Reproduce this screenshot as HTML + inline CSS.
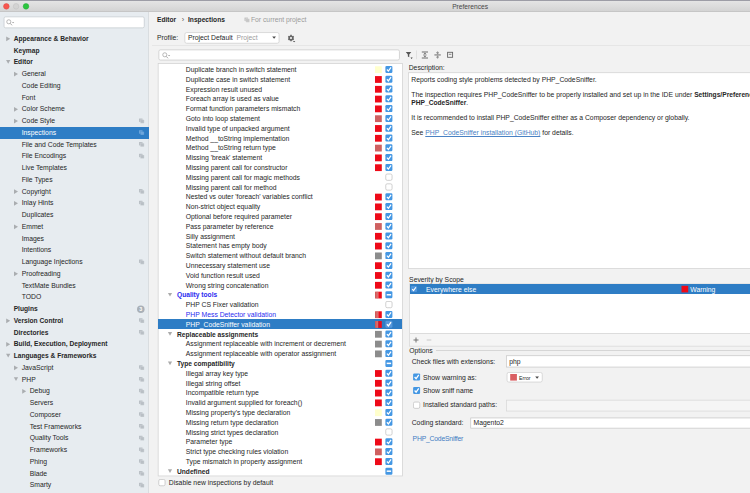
<!DOCTYPE html>
<html><head><meta charset="utf-8"><title>Preferences</title>
<style>
html,body{margin:0;padding:0;}
body{width:750px;height:493px;overflow:hidden;background:#f2f2f2;font-family:"Liberation Sans",sans-serif;color:#262626;position:relative;}
.ab{position:absolute;}
.t{position:absolute;white-space:nowrap;font-size:6.8px;line-height:10px;height:10px;}
.b{font-weight:bold;font-size:6.65px;}
.fld{position:absolute;background:#fff;border:0.6px solid #cbcbcb;box-sizing:border-box;}
</style></head><body>

<div class="ab" style="left:0px;top:0px;width:750px;height:11.7px;background:linear-gradient(#e6e6e6,#d2d2d2);"></div>
<div class="ab" style="left:0px;top:0px;width:750px;height:1.2px;background:#9d9da6;"></div>
<div class="ab" style="left:0px;top:11.4px;width:750px;height:0.6px;background:#c6c6c6;"></div>
<svg class="ab" style="left:2px;top:2px" width="10" height="10" viewBox="0 0 10 10"><g transform="translate(0.300 0.300) scale(1.0000 1.0000)"><circle cx="4.05" cy="4.05" r="2.8" fill="#f6564f" stroke="#e2463f" stroke-width="0.5"/></g></svg>
<svg class="ab" style="left:12px;top:2px" width="10" height="10" viewBox="0 0 10 10"><g transform="translate(0.050 0.300) scale(1.0000 1.0000)"><circle cx="4.05" cy="4.05" r="2.8" fill="#d3d3d3" stroke="#bfbfbf" stroke-width="0.5"/></g></svg>
<svg class="ab" style="left:21px;top:2px" width="11" height="10" viewBox="0 0 11 10"><g transform="translate(0.950 0.300) scale(1.0000 1.0000)"><circle cx="4.05" cy="4.05" r="2.8" fill="#2bc53f" stroke="#22ad33" stroke-width="0.5"/></g></svg>
<div class="t" style="left:452.2px;top:2px;color:#464646;font-size:6.65px;">Preferences</div>
<div class="ab" style="left:0px;top:12px;width:148.6px;height:481px;background:#e7ecf0;"></div>
<div class="ab" style="left:148.4px;top:12px;width:0.6px;height:481px;background:#d9dde0;"></div>
<svg class="ab" style="left:3px;top:16px" width="143" height="14" viewBox="0 0 143 14"><g transform="translate(0.700 0.500) scale(1.0000 1.0000)"><rect x="0.35" y="0.35" width="140.20" height="11.00" rx="1.6" fill="#fff" stroke="#c2c7cc" stroke-width="0.7"/></g></svg>
<svg class="ab" style="left:6px;top:19.3px" width="9" height="7" viewBox="0 0 18 14"><circle cx="5.6" cy="5.6" r="4.1" fill="none" stroke="#9c9c9c" stroke-width="1.4"/><path d="M8.6 8.8 L12 12.6" stroke="#9c9c9c" stroke-width="1.7"/><path d="M12 6 L16.4 6 L14.2 8.6 Z" fill="#9c9c9c"/></svg>
<div class="t b" style="left:13.7px;top:34px;color:#262626;">Appearance &amp; Behavior</div>
<svg class="ab" style="left:5px;top:35px" width="8" height="8" viewBox="0 0 8 8"><g transform="translate(0.200 0.850) scale(1.0000 1.0000)"><path d="M1 0.6 L5 3 L1 5.4 Z" fill="#aaadb0"/></g></svg>
<div class="t b" style="left:13.7px;top:46px;color:#262626;">Keymap</div>
<div class="t b" style="left:13.7px;top:57px;color:#262626;">Editor</div>
<svg class="ab" style="left:5px;top:58px" width="8" height="8" viewBox="0 0 8 8"><g transform="translate(0.200 0.900) scale(1.0000 1.0000)"><path d="M0.85 1.1 L5.15 1.1 L3 4.9 Z" fill="#aaadb0"/></g></svg>
<div class="t" style="left:21.7px;top:69px;color:#262626;">General</div>
<svg class="ab" style="left:13px;top:71px" width="7" height="8" viewBox="0 0 7 8"><g transform="translate(0.000 0.100) scale(1.0000 1.0000)"><path d="M1 0.6 L5 3 L1 5.4 Z" fill="#aaadb0"/></g></svg>
<div class="t" style="left:21.7px;top:81px;color:#262626;">Code Editing</div>
<div class="t" style="left:21.7px;top:93px;color:#262626;">Font</div>
<div class="t" style="left:21.7px;top:104px;color:#262626;">Color Scheme</div>
<svg class="ab" style="left:13px;top:106px" width="7" height="8" viewBox="0 0 7 8"><g transform="translate(0.000 0.350) scale(1.0000 1.0000)"><path d="M1 0.6 L5 3 L1 5.4 Z" fill="#aaadb0"/></g></svg>
<div class="t" style="left:21.7px;top:116px;color:#262626;">Code Style</div>
<svg class="ab" style="left:13px;top:118px" width="7" height="8" viewBox="0 0 7 8"><g transform="translate(0.000 0.100) scale(1.0000 1.0000)"><path d="M1 0.6 L5 3 L1 5.4 Z" fill="#aaadb0"/></g></svg>
<svg class="ab" style="left:138px;top:118px" width="8" height="7" viewBox="0 0 8 7"><g transform="translate(0.900 0.300) scale(0.5000 0.5000)"><rect x="0.2" y="0.2" width="7.2" height="7" rx="0.8" fill="#b9bfc5"/><rect x="2.9" y="2.7" width="7.6" height="7.1" rx="0.8" fill="#b9bfc5" stroke="#e7ecf0" stroke-width="0.55"/></g></svg>
<div class="ab" style="left:0px;top:127.1px;width:148.6px;height:11.6px;background:#2e7dc5;"></div>
<div class="t" style="left:21.7px;top:128px;color:#fff;">Inspections</div>
<svg class="ab" style="left:138px;top:130px" width="8" height="7" viewBox="0 0 8 7"><g transform="translate(0.900 0.050) scale(0.5000 0.5000)"><rect x="0.2" y="0.2" width="7.2" height="7" rx="0.8" fill="#6ea6dc"/><rect x="2.9" y="2.7" width="7.6" height="7.1" rx="0.8" fill="#6ea6dc" stroke="#2e7dc5" stroke-width="0.55"/></g></svg>
<div class="t" style="left:21.7px;top:140px;color:#262626;">File and Code Templates</div>
<svg class="ab" style="left:138px;top:141px" width="8" height="7" viewBox="0 0 8 7"><g transform="translate(0.900 0.800) scale(0.5000 0.5000)"><rect x="0.2" y="0.2" width="7.2" height="7" rx="0.8" fill="#b9bfc5"/><rect x="2.9" y="2.7" width="7.6" height="7.1" rx="0.8" fill="#b9bfc5" stroke="#e7ecf0" stroke-width="0.55"/></g></svg>
<div class="t" style="left:21.7px;top:151px;color:#262626;">File Encodings</div>
<svg class="ab" style="left:138px;top:153px" width="8" height="7" viewBox="0 0 8 7"><g transform="translate(0.900 0.550) scale(0.5000 0.5000)"><rect x="0.2" y="0.2" width="7.2" height="7" rx="0.8" fill="#b9bfc5"/><rect x="2.9" y="2.7" width="7.6" height="7.1" rx="0.8" fill="#b9bfc5" stroke="#e7ecf0" stroke-width="0.55"/></g></svg>
<div class="t" style="left:21.7px;top:163px;color:#262626;">Live Templates</div>
<div class="t" style="left:21.7px;top:175px;color:#262626;">File Types</div>
<div class="t" style="left:21.7px;top:187px;color:#262626;">Copyright</div>
<svg class="ab" style="left:13px;top:188px" width="7" height="8" viewBox="0 0 7 8"><g transform="translate(0.000 0.600) scale(1.0000 1.0000)"><path d="M1 0.6 L5 3 L1 5.4 Z" fill="#aaadb0"/></g></svg>
<svg class="ab" style="left:138px;top:188px" width="8" height="7" viewBox="0 0 8 7"><g transform="translate(0.900 0.800) scale(0.5000 0.5000)"><rect x="0.2" y="0.2" width="7.2" height="7" rx="0.8" fill="#b9bfc5"/><rect x="2.9" y="2.7" width="7.6" height="7.1" rx="0.8" fill="#b9bfc5" stroke="#e7ecf0" stroke-width="0.55"/></g></svg>
<div class="t" style="left:21.7px;top:198px;color:#262626;">Inlay Hints</div>
<svg class="ab" style="left:13px;top:200px" width="7" height="8" viewBox="0 0 7 8"><g transform="translate(0.000 0.350) scale(1.0000 1.0000)"><path d="M1 0.6 L5 3 L1 5.4 Z" fill="#aaadb0"/></g></svg>
<svg class="ab" style="left:138px;top:200px" width="8" height="7" viewBox="0 0 8 7"><g transform="translate(0.900 0.550) scale(0.5000 0.5000)"><rect x="0.2" y="0.2" width="7.2" height="7" rx="0.8" fill="#b9bfc5"/><rect x="2.9" y="2.7" width="7.6" height="7.1" rx="0.8" fill="#b9bfc5" stroke="#e7ecf0" stroke-width="0.55"/></g></svg>
<div class="t" style="left:21.7px;top:210px;color:#262626;">Duplicates</div>
<div class="t" style="left:21.7px;top:222px;color:#262626;">Emmet</div>
<svg class="ab" style="left:13px;top:223px" width="7" height="8" viewBox="0 0 7 8"><g transform="translate(0.000 0.850) scale(1.0000 1.0000)"><path d="M1 0.6 L5 3 L1 5.4 Z" fill="#aaadb0"/></g></svg>
<div class="t" style="left:21.7px;top:234px;color:#262626;">Images</div>
<div class="t" style="left:21.7px;top:245px;color:#262626;">Intentions</div>
<div class="t" style="left:21.7px;top:257px;color:#262626;">Language Injections</div>
<svg class="ab" style="left:138px;top:259px" width="8" height="7" viewBox="0 0 8 7"><g transform="translate(0.900 0.300) scale(0.5000 0.5000)"><rect x="0.2" y="0.2" width="7.2" height="7" rx="0.8" fill="#b9bfc5"/><rect x="2.9" y="2.7" width="7.6" height="7.1" rx="0.8" fill="#b9bfc5" stroke="#e7ecf0" stroke-width="0.55"/></g></svg>
<div class="t" style="left:21.7px;top:269px;color:#262626;">Proofreading</div>
<svg class="ab" style="left:13px;top:270px" width="7" height="8" viewBox="0 0 7 8"><g transform="translate(0.000 0.850) scale(1.0000 1.0000)"><path d="M1 0.6 L5 3 L1 5.4 Z" fill="#aaadb0"/></g></svg>
<div class="t" style="left:21.7px;top:281px;color:#262626;">TextMate Bundles</div>
<div class="t" style="left:21.7px;top:292px;color:#262626;">TODO</div>
<div class="t b" style="left:13.7px;top:304px;color:#262626;">Plugins</div>
<svg class="ab" style="left:136px;top:304px" width="11" height="12" viewBox="0 0 11 12"><g transform="translate(0.050 0.550) scale(1.0000 1.0000)"><circle cx="4.75" cy="4.75" r="3.75" fill="#a9b0b7"/></g></svg>
<div class="ab" style="left:137px;top:306px;width:7.6px;height:6px;color:#fff;font-size:5.4px;line-height:6px;text-align:center;font-weight:bold;">3</div>
<div class="t b" style="left:13.7px;top:316px;color:#262626;">Version Control</div>
<svg class="ab" style="left:5px;top:317px" width="8" height="8" viewBox="0 0 8 8"><g transform="translate(0.200 0.850) scale(1.0000 1.0000)"><path d="M1 0.6 L5 3 L1 5.4 Z" fill="#aaadb0"/></g></svg>
<svg class="ab" style="left:138px;top:318px" width="8" height="7" viewBox="0 0 8 7"><g transform="translate(0.900 0.050) scale(0.5000 0.5000)"><rect x="0.2" y="0.2" width="7.2" height="7" rx="0.8" fill="#b9bfc5"/><rect x="2.9" y="2.7" width="7.6" height="7.1" rx="0.8" fill="#b9bfc5" stroke="#e7ecf0" stroke-width="0.55"/></g></svg>
<div class="t b" style="left:13.7px;top:328px;color:#262626;">Directories</div>
<svg class="ab" style="left:138px;top:329px" width="8" height="7" viewBox="0 0 8 7"><g transform="translate(0.900 0.800) scale(0.5000 0.5000)"><rect x="0.2" y="0.2" width="7.2" height="7" rx="0.8" fill="#b9bfc5"/><rect x="2.9" y="2.7" width="7.6" height="7.1" rx="0.8" fill="#b9bfc5" stroke="#e7ecf0" stroke-width="0.55"/></g></svg>
<div class="t b" style="left:13.7px;top:339px;color:#262626;">Build, Execution, Deployment</div>
<svg class="ab" style="left:5px;top:341px" width="8" height="8" viewBox="0 0 8 8"><g transform="translate(0.200 0.350) scale(1.0000 1.0000)"><path d="M1 0.6 L5 3 L1 5.4 Z" fill="#aaadb0"/></g></svg>
<div class="t b" style="left:13.7px;top:351px;color:#262626;">Languages &amp; Frameworks</div>
<svg class="ab" style="left:5px;top:352px" width="8" height="8" viewBox="0 0 8 8"><g transform="translate(0.200 0.650) scale(1.0000 1.0000)"><path d="M0.85 1.1 L5.15 1.1 L3 4.9 Z" fill="#aaadb0"/></g></svg>
<div class="t" style="left:21.7px;top:363px;color:#262626;">JavaScript</div>
<svg class="ab" style="left:13px;top:364px" width="7" height="8" viewBox="0 0 7 8"><g transform="translate(0.000 0.850) scale(1.0000 1.0000)"><path d="M1 0.6 L5 3 L1 5.4 Z" fill="#aaadb0"/></g></svg>
<svg class="ab" style="left:138px;top:365px" width="8" height="7" viewBox="0 0 8 7"><g transform="translate(0.900 0.050) scale(0.5000 0.5000)"><rect x="0.2" y="0.2" width="7.2" height="7" rx="0.8" fill="#b9bfc5"/><rect x="2.9" y="2.7" width="7.6" height="7.1" rx="0.8" fill="#b9bfc5" stroke="#e7ecf0" stroke-width="0.55"/></g></svg>
<div class="t" style="left:21.7px;top:375px;color:#262626;">PHP</div>
<svg class="ab" style="left:13px;top:376px" width="7" height="8" viewBox="0 0 7 8"><g transform="translate(0.000 0.150) scale(1.0000 1.0000)"><path d="M0.85 1.1 L5.15 1.1 L3 4.9 Z" fill="#aaadb0"/></g></svg>
<svg class="ab" style="left:138px;top:376px" width="8" height="7" viewBox="0 0 8 7"><g transform="translate(0.900 0.800) scale(0.5000 0.5000)"><rect x="0.2" y="0.2" width="7.2" height="7" rx="0.8" fill="#b9bfc5"/><rect x="2.9" y="2.7" width="7.6" height="7.1" rx="0.8" fill="#b9bfc5" stroke="#e7ecf0" stroke-width="0.55"/></g></svg>
<div class="t" style="left:29.7px;top:386px;color:#262626;">Debug</div>
<svg class="ab" style="left:21px;top:388px" width="8" height="8" viewBox="0 0 8 8"><g transform="translate(0.200 0.350) scale(1.0000 1.0000)"><path d="M1 0.6 L5 3 L1 5.4 Z" fill="#aaadb0"/></g></svg>
<svg class="ab" style="left:138px;top:388px" width="8" height="7" viewBox="0 0 8 7"><g transform="translate(0.900 0.550) scale(0.5000 0.5000)"><rect x="0.2" y="0.2" width="7.2" height="7" rx="0.8" fill="#b9bfc5"/><rect x="2.9" y="2.7" width="7.6" height="7.1" rx="0.8" fill="#b9bfc5" stroke="#e7ecf0" stroke-width="0.55"/></g></svg>
<div class="t" style="left:29.7px;top:398px;color:#262626;">Servers</div>
<svg class="ab" style="left:138px;top:400px" width="8" height="7" viewBox="0 0 8 7"><g transform="translate(0.900 0.300) scale(0.5000 0.5000)"><rect x="0.2" y="0.2" width="7.2" height="7" rx="0.8" fill="#b9bfc5"/><rect x="2.9" y="2.7" width="7.6" height="7.1" rx="0.8" fill="#b9bfc5" stroke="#e7ecf0" stroke-width="0.55"/></g></svg>
<div class="t" style="left:29.7px;top:410px;color:#262626;">Composer</div>
<svg class="ab" style="left:138px;top:412px" width="8" height="7" viewBox="0 0 8 7"><g transform="translate(0.900 0.050) scale(0.5000 0.5000)"><rect x="0.2" y="0.2" width="7.2" height="7" rx="0.8" fill="#b9bfc5"/><rect x="2.9" y="2.7" width="7.6" height="7.1" rx="0.8" fill="#b9bfc5" stroke="#e7ecf0" stroke-width="0.55"/></g></svg>
<div class="t" style="left:29.7px;top:422px;color:#262626;">Test Frameworks</div>
<svg class="ab" style="left:138px;top:423px" width="8" height="7" viewBox="0 0 8 7"><g transform="translate(0.900 0.800) scale(0.5000 0.5000)"><rect x="0.2" y="0.2" width="7.2" height="7" rx="0.8" fill="#b9bfc5"/><rect x="2.9" y="2.7" width="7.6" height="7.1" rx="0.8" fill="#b9bfc5" stroke="#e7ecf0" stroke-width="0.55"/></g></svg>
<div class="t" style="left:29.7px;top:433px;color:#262626;">Quality Tools</div>
<svg class="ab" style="left:138px;top:435px" width="8" height="7" viewBox="0 0 8 7"><g transform="translate(0.900 0.550) scale(0.5000 0.5000)"><rect x="0.2" y="0.2" width="7.2" height="7" rx="0.8" fill="#b9bfc5"/><rect x="2.9" y="2.7" width="7.6" height="7.1" rx="0.8" fill="#b9bfc5" stroke="#e7ecf0" stroke-width="0.55"/></g></svg>
<div class="t" style="left:29.7px;top:445px;color:#262626;">Frameworks</div>
<svg class="ab" style="left:138px;top:447px" width="8" height="7" viewBox="0 0 8 7"><g transform="translate(0.900 0.300) scale(0.5000 0.5000)"><rect x="0.2" y="0.2" width="7.2" height="7" rx="0.8" fill="#b9bfc5"/><rect x="2.9" y="2.7" width="7.6" height="7.1" rx="0.8" fill="#b9bfc5" stroke="#e7ecf0" stroke-width="0.55"/></g></svg>
<div class="t" style="left:29.7px;top:457px;color:#262626;">Phing</div>
<svg class="ab" style="left:138px;top:459px" width="8" height="7" viewBox="0 0 8 7"><g transform="translate(0.900 0.050) scale(0.5000 0.5000)"><rect x="0.2" y="0.2" width="7.2" height="7" rx="0.8" fill="#b9bfc5"/><rect x="2.9" y="2.7" width="7.6" height="7.1" rx="0.8" fill="#b9bfc5" stroke="#e7ecf0" stroke-width="0.55"/></g></svg>
<div class="t" style="left:29.7px;top:469px;color:#262626;">Blade</div>
<svg class="ab" style="left:138px;top:470px" width="8" height="7" viewBox="0 0 8 7"><g transform="translate(0.900 0.800) scale(0.5000 0.5000)"><rect x="0.2" y="0.2" width="7.2" height="7" rx="0.8" fill="#b9bfc5"/><rect x="2.9" y="2.7" width="7.6" height="7.1" rx="0.8" fill="#b9bfc5" stroke="#e7ecf0" stroke-width="0.55"/></g></svg>
<div class="t" style="left:29.7px;top:480px;color:#262626;">Smarty</div>
<svg class="ab" style="left:138px;top:482px" width="8" height="7" viewBox="0 0 8 7"><g transform="translate(0.900 0.550) scale(0.5000 0.5000)"><rect x="0.2" y="0.2" width="7.2" height="7" rx="0.8" fill="#b9bfc5"/><rect x="2.9" y="2.7" width="7.6" height="7.1" rx="0.8" fill="#b9bfc5" stroke="#e7ecf0" stroke-width="0.55"/></g></svg>
<div class="t b" style="left:157px;top:15px;">Editor</div>
<div class="t" style="left:181.8px;top:15px;color:#555;font-size:7.4px;">›</div>
<div class="t b" style="left:188px;top:15px;">Inspections</div>
<svg class="ab" style="left:244px;top:17px" width="7" height="7" viewBox="0 0 7 7"><g transform="translate(0.300 0.300) scale(0.5000 0.5000)"><rect x="0.2" y="0.2" width="7.2" height="7" rx="0.8" fill="#c6c6c6"/><rect x="2.9" y="2.7" width="7.6" height="7.1" rx="0.8" fill="#c6c6c6" stroke="#f2f2f2" stroke-width="0.55"/></g></svg>
<div class="t" style="left:250.9px;top:15px;color:#9b9b9b;">For current project</div>
<div class="ab" style="left:152px;top:45.2px;width:598px;height:0.6px;background:#e6e6e6;"></div>
<div class="t" style="left:157px;top:33px;">Profile:</div>
<svg class="ab" style="left:184px;top:32px" width="97" height="13" viewBox="0 0 97 13"><g transform="translate(0.500 0.200) scale(1.0000 1.0000)"><rect x="0.35" y="0.35" width="94.20" height="10.70" rx="1.8" fill="#fff" stroke="#cdcdcd" stroke-width="0.7"/></g></svg>
<div class="t" style="left:188px;top:33px;">Project Default</div>
<div class="t" style="left:236.4px;top:33px;color:#9b9b9b;">Project</div>
<svg class="ab" style="left:272px;top:36px" width="6" height="4" viewBox="0 0 6 4"><g transform="translate(0.100 0.500) scale(0.8000 0.8000)"><path d="M0.1 0.1 L4.9 0.1 L2.5 2.95 Z" fill="#4a4a4a"/></g></svg>
<svg class="ab" style="left:286.8px;top:33.8px" width="10" height="10" viewBox="-4 -4 10 10"><circle cx="0" cy="0" r="1.85" fill="none" stroke="#666" stroke-width="1.5"/><path d="M0.00 -2.00 L0.00 -3.15 M1.73 -1.00 L2.73 -1.58 M1.73 1.00 L2.73 1.57 M0.00 2.00 L0.00 3.15 M-1.73 1.00 L-2.73 1.58 M-1.73 -1.00 L-2.73 -1.58" stroke="#666" stroke-width="1.45" fill="none"/><path d="M1.9 3 L4.3 3 L3.1 4.3 Z" fill="#4a4a4a"/></svg>
<svg class="ab" style="left:158px;top:49px" width="243" height="13" viewBox="0 0 243 13"><g transform="translate(0.500 0.500) scale(1.0000 1.0000)"><rect x="0.35" y="0.35" width="240.60" height="10.20" rx="1.6" fill="#fff" stroke="#c6c6c6" stroke-width="0.7"/></g></svg>
<svg class="ab" style="left:161.5px;top:51.8px" width="9" height="7" viewBox="0 0 18 14"><circle cx="5.6" cy="5.6" r="4.1" fill="none" stroke="#9c9c9c" stroke-width="1.4"/><path d="M8.6 8.8 L12 12.6" stroke="#9c9c9c" stroke-width="1.7"/><path d="M12 6 L16.4 6 L14.2 8.6 Z" fill="#9c9c9c"/></svg>
<svg class="ab" style="left:404px;top:50px" width="52" height="10" viewBox="0 0 104 20"><path d="M3.6 3.8 H14.6 L10.5 8.8 V14.6 L7.7 13.2 V8.8 Z" fill="#555"/><path d="M13 15 L17.4 15 L15.2 17.8 Z" fill="#3c3c3c"/><rect x="24.8" y="0.8" width="1.1" height="17.6" fill="#d4d4d4"/><g stroke="#666" stroke-width="1.9" fill="none"><path d="M35.6 4 H48 M35.6 16 H48"/><path d="M41.8 6.4 V13.6 M39 8.8 L41.8 6.2 L44.6 8.8 M39 11.2 L41.8 13.8 L44.6 11.2" stroke-width="1.5"/></g><g stroke="#666" stroke-width="1.9" fill="none"><path d="M60.8 9.9 H73.6"/><path d="M67.2 3 V7 M64.6 5 L67.2 7.4 L69.8 5 M67.2 17 V12.8 M64.6 14.8 L67.2 12.4 L69.8 14.8" stroke-width="1.5"/></g><g stroke="#666" stroke-width="1.8" fill="none"><rect x="87.2" y="4.6" width="10" height="10"/><path d="M89.6 8.6 H94.8" stroke-width="1.5"/></g></svg>
<svg class="ab" style="left:157px;top:63px" width="247" height="415" viewBox="0 0 247 415"><g transform="translate(0.800 0.300) scale(1.0000 1.0000)"><rect x="0.35" y="0.35" width="244.20" height="412.30" rx="0" fill="#fff" stroke="#d0d0d0" stroke-width="0.7"/></g></svg>
<div class="t" style="left:185.8px;top:65px;color:#262626;">Duplicate branch in switch statement</div>
<svg class="ab" style="left:375px;top:66px" width="8" height="9" viewBox="0 0 8 9"><g transform="translate(0.000 0.280) scale(1.0000 1.0000)"><rect width="6.8" height="6.8" fill="#ffffcc"/></g></svg>
<svg class="ab" style="left:385px;top:65px" width="9" height="9" viewBox="0 0 9 9"><g transform="translate(0.400 0.880) scale(0.5000 0.5000)"><rect width="14" height="14" rx="2.4" fill="#4497e3"/><path d="M3 7.2 L6 10.5 L11.3 3.1" fill="none" stroke="#fff" stroke-width="2.5"/></g></svg>
<div class="t" style="left:185.8px;top:75px;color:#262626;">Duplicate case in switch statement</div>
<svg class="ab" style="left:375px;top:76px" width="8" height="8" viewBox="0 0 8 8"><g transform="translate(0.000 0.080) scale(1.0000 1.0000)"><rect width="6.8" height="6.8" fill="#ee0a18"/></g></svg>
<svg class="ab" style="left:385px;top:75px" width="9" height="9" viewBox="0 0 9 9"><g transform="translate(0.400 0.680) scale(0.5000 0.5000)"><rect width="14" height="14" rx="2.4" fill="#4497e3"/><path d="M3 7.2 L6 10.5 L11.3 3.1" fill="none" stroke="#fff" stroke-width="2.5"/></g></svg>
<div class="t" style="left:185.8px;top:85px;color:#262626;">Expression result unused</div>
<svg class="ab" style="left:375px;top:85px" width="8" height="9" viewBox="0 0 8 9"><g transform="translate(0.000 0.880) scale(1.0000 1.0000)"><rect width="6.8" height="6.8" fill="#ee0a18"/></g></svg>
<svg class="ab" style="left:385px;top:85px" width="9" height="9" viewBox="0 0 9 9"><g transform="translate(0.400 0.480) scale(0.5000 0.5000)"><rect width="14" height="14" rx="2.4" fill="#4497e3"/><path d="M3 7.2 L6 10.5 L11.3 3.1" fill="none" stroke="#fff" stroke-width="2.5"/></g></svg>
<div class="t" style="left:185.8px;top:94px;color:#262626;">Foreach array is used as value</div>
<svg class="ab" style="left:375px;top:95px" width="8" height="9" viewBox="0 0 8 9"><g transform="translate(0.000 0.680) scale(1.0000 1.0000)"><rect width="6.8" height="6.8" fill="#ee0a18"/></g></svg>
<svg class="ab" style="left:385px;top:95px" width="9" height="9" viewBox="0 0 9 9"><g transform="translate(0.400 0.280) scale(0.5000 0.5000)"><rect width="14" height="14" rx="2.4" fill="#4497e3"/><path d="M3 7.2 L6 10.5 L11.3 3.1" fill="none" stroke="#fff" stroke-width="2.5"/></g></svg>
<div class="t" style="left:185.8px;top:104px;color:#262626;">Format function parameters mismatch</div>
<svg class="ab" style="left:375px;top:105px" width="8" height="9" viewBox="0 0 8 9"><g transform="translate(0.000 0.480) scale(1.0000 1.0000)"><rect width="6.8" height="6.8" fill="#ee0a18"/></g></svg>
<svg class="ab" style="left:385px;top:105px" width="9" height="9" viewBox="0 0 9 9"><g transform="translate(0.400 0.080) scale(0.5000 0.5000)"><rect width="14" height="14" rx="2.4" fill="#4497e3"/><path d="M3 7.2 L6 10.5 L11.3 3.1" fill="none" stroke="#fff" stroke-width="2.5"/></g></svg>
<div class="t" style="left:185.8px;top:114px;color:#262626;">Goto into loop statement</div>
<svg class="ab" style="left:375px;top:115px" width="8" height="9" viewBox="0 0 8 9"><g transform="translate(0.000 0.280) scale(1.0000 1.0000)"><rect width="6.8" height="6.8" fill="#cf6060"/></g></svg>
<svg class="ab" style="left:385px;top:114px" width="9" height="9" viewBox="0 0 9 9"><g transform="translate(0.400 0.880) scale(0.5000 0.5000)"><rect width="14" height="14" rx="2.4" fill="#4497e3"/><path d="M3 7.2 L6 10.5 L11.3 3.1" fill="none" stroke="#fff" stroke-width="2.5"/></g></svg>
<div class="t" style="left:185.8px;top:124px;color:#262626;">Invalid type of unpacked argument</div>
<svg class="ab" style="left:375px;top:125px" width="8" height="8" viewBox="0 0 8 8"><g transform="translate(0.000 0.080) scale(1.0000 1.0000)"><rect width="6.8" height="6.8" fill="#ee0a18"/></g></svg>
<svg class="ab" style="left:385px;top:124px" width="9" height="9" viewBox="0 0 9 9"><g transform="translate(0.400 0.680) scale(0.5000 0.5000)"><rect width="14" height="14" rx="2.4" fill="#4497e3"/><path d="M3 7.2 L6 10.5 L11.3 3.1" fill="none" stroke="#fff" stroke-width="2.5"/></g></svg>
<div class="t" style="left:185.8px;top:134px;color:#262626;">Method __toString implementation</div>
<svg class="ab" style="left:375px;top:134px" width="8" height="9" viewBox="0 0 8 9"><g transform="translate(0.000 0.880) scale(1.0000 1.0000)"><rect width="6.8" height="6.8" fill="#ee0a18"/></g></svg>
<svg class="ab" style="left:385px;top:134px" width="9" height="9" viewBox="0 0 9 9"><g transform="translate(0.400 0.480) scale(0.5000 0.5000)"><rect width="14" height="14" rx="2.4" fill="#4497e3"/><path d="M3 7.2 L6 10.5 L11.3 3.1" fill="none" stroke="#fff" stroke-width="2.5"/></g></svg>
<div class="t" style="left:185.8px;top:143px;color:#262626;">Method __toString return type</div>
<svg class="ab" style="left:375px;top:144px" width="8" height="9" viewBox="0 0 8 9"><g transform="translate(0.000 0.680) scale(1.0000 1.0000)"><rect width="6.8" height="6.8" fill="#cf6060"/></g></svg>
<svg class="ab" style="left:385px;top:144px" width="9" height="9" viewBox="0 0 9 9"><g transform="translate(0.400 0.280) scale(0.5000 0.5000)"><rect width="14" height="14" rx="2.4" fill="#4497e3"/><path d="M3 7.2 L6 10.5 L11.3 3.1" fill="none" stroke="#fff" stroke-width="2.5"/></g></svg>
<div class="t" style="left:185.8px;top:153px;color:#262626;">Missing 'break' statement</div>
<svg class="ab" style="left:375px;top:154px" width="8" height="9" viewBox="0 0 8 9"><g transform="translate(0.000 0.480) scale(1.0000 1.0000)"><rect width="6.8" height="6.8" fill="#ee0a18"/></g></svg>
<svg class="ab" style="left:385px;top:154px" width="9" height="9" viewBox="0 0 9 9"><g transform="translate(0.400 0.080) scale(0.5000 0.5000)"><rect width="14" height="14" rx="2.4" fill="#4497e3"/><path d="M3 7.2 L6 10.5 L11.3 3.1" fill="none" stroke="#fff" stroke-width="2.5"/></g></svg>
<div class="t" style="left:185.8px;top:163px;color:#262626;">Missing parent call for constructor</div>
<svg class="ab" style="left:375px;top:164px" width="8" height="9" viewBox="0 0 8 9"><g transform="translate(0.000 0.280) scale(1.0000 1.0000)"><rect width="6.8" height="6.8" fill="#ee0a18"/></g></svg>
<svg class="ab" style="left:385px;top:163px" width="9" height="9" viewBox="0 0 9 9"><g transform="translate(0.400 0.880) scale(0.5000 0.5000)"><rect width="14" height="14" rx="2.4" fill="#4497e3"/><path d="M3 7.2 L6 10.5 L11.3 3.1" fill="none" stroke="#fff" stroke-width="2.5"/></g></svg>
<div class="t" style="left:185.8px;top:173px;color:#262626;">Missing parent call for magic methods</div>
<svg class="ab" style="left:385px;top:173px" width="9" height="9" viewBox="0 0 9 9"><g transform="translate(0.400 0.680) scale(0.5000 0.5000)"><rect x="0.7" y="0.7" width="12.6" height="12.6" rx="2.8" fill="#fff" stroke="#bdbdbd" stroke-width="1.4"/></g></svg>
<div class="t" style="left:185.8px;top:183px;color:#262626;">Missing parent call for method</div>
<svg class="ab" style="left:385px;top:183px" width="9" height="9" viewBox="0 0 9 9"><g transform="translate(0.400 0.480) scale(0.5000 0.5000)"><rect x="0.7" y="0.7" width="12.6" height="12.6" rx="2.8" fill="#fff" stroke="#bdbdbd" stroke-width="1.4"/></g></svg>
<div class="t" style="left:185.8px;top:192px;color:#262626;">Nested vs outer 'foreach' variables conflict</div>
<svg class="ab" style="left:375px;top:193px" width="8" height="9" viewBox="0 0 8 9"><g transform="translate(0.000 0.680) scale(1.0000 1.0000)"><rect width="6.8" height="6.8" fill="#ee0a18"/></g></svg>
<svg class="ab" style="left:385px;top:193px" width="9" height="9" viewBox="0 0 9 9"><g transform="translate(0.400 0.280) scale(0.5000 0.5000)"><rect width="14" height="14" rx="2.4" fill="#4497e3"/><path d="M3 7.2 L6 10.5 L11.3 3.1" fill="none" stroke="#fff" stroke-width="2.5"/></g></svg>
<div class="t" style="left:185.8px;top:202px;color:#262626;">Non-strict object equality</div>
<svg class="ab" style="left:375px;top:203px" width="8" height="9" viewBox="0 0 8 9"><g transform="translate(0.000 0.480) scale(1.0000 1.0000)"><rect width="6.8" height="6.8" fill="#ee0a18"/></g></svg>
<svg class="ab" style="left:385px;top:203px" width="9" height="9" viewBox="0 0 9 9"><g transform="translate(0.400 0.080) scale(0.5000 0.5000)"><rect width="14" height="14" rx="2.4" fill="#4497e3"/><path d="M3 7.2 L6 10.5 L11.3 3.1" fill="none" stroke="#fff" stroke-width="2.5"/></g></svg>
<div class="t" style="left:185.8px;top:212px;color:#262626;">Optional before required parameter</div>
<svg class="ab" style="left:375px;top:213px" width="8" height="9" viewBox="0 0 8 9"><g transform="translate(0.000 0.280) scale(1.0000 1.0000)"><rect width="6.8" height="6.8" fill="#ee0a18"/></g></svg>
<svg class="ab" style="left:385px;top:212px" width="9" height="9" viewBox="0 0 9 9"><g transform="translate(0.400 0.880) scale(0.5000 0.5000)"><rect width="14" height="14" rx="2.4" fill="#4497e3"/><path d="M3 7.2 L6 10.5 L11.3 3.1" fill="none" stroke="#fff" stroke-width="2.5"/></g></svg>
<div class="t" style="left:185.8px;top:222px;color:#262626;">Pass parameter by reference</div>
<svg class="ab" style="left:375px;top:223px" width="8" height="8" viewBox="0 0 8 8"><g transform="translate(0.000 0.080) scale(1.0000 1.0000)"><rect width="6.8" height="6.8" fill="#cf6060"/></g></svg>
<svg class="ab" style="left:385px;top:222px" width="9" height="9" viewBox="0 0 9 9"><g transform="translate(0.400 0.680) scale(0.5000 0.5000)"><rect width="14" height="14" rx="2.4" fill="#4497e3"/><path d="M3 7.2 L6 10.5 L11.3 3.1" fill="none" stroke="#fff" stroke-width="2.5"/></g></svg>
<div class="t" style="left:185.8px;top:232px;color:#262626;">Silly assignment</div>
<svg class="ab" style="left:375px;top:232px" width="8" height="9" viewBox="0 0 8 9"><g transform="translate(0.000 0.880) scale(1.0000 1.0000)"><rect width="6.8" height="6.8" fill="#ee0a18"/></g></svg>
<svg class="ab" style="left:385px;top:232px" width="9" height="9" viewBox="0 0 9 9"><g transform="translate(0.400 0.480) scale(0.5000 0.5000)"><rect width="14" height="14" rx="2.4" fill="#4497e3"/><path d="M3 7.2 L6 10.5 L11.3 3.1" fill="none" stroke="#fff" stroke-width="2.5"/></g></svg>
<div class="t" style="left:185.8px;top:241px;color:#262626;">Statement has empty body</div>
<svg class="ab" style="left:375px;top:242px" width="8" height="9" viewBox="0 0 8 9"><g transform="translate(0.000 0.680) scale(1.0000 1.0000)"><rect width="6.8" height="6.8" fill="#ee0a18"/></g></svg>
<svg class="ab" style="left:385px;top:242px" width="9" height="9" viewBox="0 0 9 9"><g transform="translate(0.400 0.280) scale(0.5000 0.5000)"><rect width="14" height="14" rx="2.4" fill="#4497e3"/><path d="M3 7.2 L6 10.5 L11.3 3.1" fill="none" stroke="#fff" stroke-width="2.5"/></g></svg>
<div class="t" style="left:185.8px;top:251px;color:#262626;">Switch statement without default branch</div>
<svg class="ab" style="left:375px;top:252px" width="8" height="9" viewBox="0 0 8 9"><g transform="translate(0.000 0.480) scale(1.0000 1.0000)"><rect width="6.8" height="6.8" fill="#8c8c8c"/></g></svg>
<svg class="ab" style="left:385px;top:252px" width="9" height="9" viewBox="0 0 9 9"><g transform="translate(0.400 0.080) scale(0.5000 0.5000)"><rect width="14" height="14" rx="2.4" fill="#4497e3"/><path d="M3 7.2 L6 10.5 L11.3 3.1" fill="none" stroke="#fff" stroke-width="2.5"/></g></svg>
<div class="t" style="left:185.8px;top:261px;color:#262626;">Unnecessary statement use</div>
<svg class="ab" style="left:375px;top:262px" width="8" height="9" viewBox="0 0 8 9"><g transform="translate(0.000 0.280) scale(1.0000 1.0000)"><rect width="6.8" height="6.8" fill="#ee0a18"/></g></svg>
<svg class="ab" style="left:385px;top:261px" width="9" height="9" viewBox="0 0 9 9"><g transform="translate(0.400 0.880) scale(0.5000 0.5000)"><rect width="14" height="14" rx="2.4" fill="#4497e3"/><path d="M3 7.2 L6 10.5 L11.3 3.1" fill="none" stroke="#fff" stroke-width="2.5"/></g></svg>
<div class="t" style="left:185.8px;top:271px;color:#262626;">Void function result used</div>
<svg class="ab" style="left:375px;top:272px" width="8" height="8" viewBox="0 0 8 8"><g transform="translate(0.000 0.080) scale(1.0000 1.0000)"><rect width="6.8" height="6.8" fill="#ee0a18"/></g></svg>
<svg class="ab" style="left:385px;top:271px" width="9" height="9" viewBox="0 0 9 9"><g transform="translate(0.400 0.680) scale(0.5000 0.5000)"><rect width="14" height="14" rx="2.4" fill="#4497e3"/><path d="M3 7.2 L6 10.5 L11.3 3.1" fill="none" stroke="#fff" stroke-width="2.5"/></g></svg>
<div class="t" style="left:185.8px;top:281px;color:#262626;">Wrong string concatenation</div>
<svg class="ab" style="left:375px;top:281px" width="8" height="9" viewBox="0 0 8 9"><g transform="translate(0.000 0.880) scale(1.0000 1.0000)"><rect width="6.8" height="6.8" fill="#ee0a18"/></g></svg>
<svg class="ab" style="left:385px;top:281px" width="9" height="9" viewBox="0 0 9 9"><g transform="translate(0.400 0.480) scale(0.5000 0.5000)"><rect width="14" height="14" rx="2.4" fill="#4497e3"/><path d="M3 7.2 L6 10.5 L11.3 3.1" fill="none" stroke="#fff" stroke-width="2.5"/></g></svg>
<svg class="ab" style="left:167px;top:291px" width="7" height="8" viewBox="0 0 7 8"><g transform="translate(0.000 0.730) scale(1.0000 1.0000)"><path d="M0.9 1.15 L5.1 1.15 L3 4.85 Z" fill="#ababab"/></g></svg>
<div class="t b" style="left:177px;top:290px;color:#2a2af0;">Quality tools</div>
<svg class="ab" style="left:375px;top:291px" width="8" height="9" viewBox="0 0 8 9"><g transform="translate(0.000 0.680) scale(1.0000 1.0000)"><rect x="0" y="0" width="3.3" height="6.8" fill="#cf5252"/><rect x="0.8" y="0" width="0.7" height="6.8" fill="#e07a7a"/><rect x="2.2" y="0" width="0.7" height="6.8" fill="#e07a7a"/><rect x="3.3" y="0" width="3.5" height="6.8" fill="#ee0a18"/></g></svg>
<svg class="ab" style="left:385px;top:291px" width="9" height="9" viewBox="0 0 9 9"><g transform="translate(0.400 0.280) scale(0.5000 0.5000)"><rect width="14" height="14" rx="2.4" fill="#4497e3"/><rect x="2.6" y="5.5" width="8.8" height="3" fill="#fff"/></g></svg>
<div class="t" style="left:185.8px;top:300px;color:#262626;">PHP CS Fixer validation</div>
<svg class="ab" style="left:385px;top:301px" width="9" height="9" viewBox="0 0 9 9"><g transform="translate(0.400 0.080) scale(0.5000 0.5000)"><rect x="0.7" y="0.7" width="12.6" height="12.6" rx="2.8" fill="#fff" stroke="#bdbdbd" stroke-width="1.4"/></g></svg>
<div class="t" style="left:185.8px;top:310px;color:#2a2af0;">PHP Mess Detector validation</div>
<svg class="ab" style="left:375px;top:311px" width="8" height="9" viewBox="0 0 8 9"><g transform="translate(0.000 0.280) scale(1.0000 1.0000)"><rect x="0" y="0" width="3.3" height="6.8" fill="#cf5252"/><rect x="0.8" y="0" width="0.7" height="6.8" fill="#e07a7a"/><rect x="2.2" y="0" width="0.7" height="6.8" fill="#e07a7a"/><rect x="3.3" y="0" width="3.5" height="6.8" fill="#ee0a18"/></g></svg>
<svg class="ab" style="left:385px;top:310px" width="9" height="9" viewBox="0 0 9 9"><g transform="translate(0.400 0.880) scale(0.5000 0.5000)"><rect width="14" height="14" rx="2.4" fill="#4497e3"/><path d="M3 7.2 L6 10.5 L11.3 3.1" fill="none" stroke="#fff" stroke-width="2.5"/></g></svg>
<div class="ab" style="left:157.6px;top:319.23px;width:244.6px;height:9.8px;background:#2e7dc5;"></div>
<div class="t" style="left:185.8px;top:320px;color:#fff;">PHP_CodeSniffer validation</div>
<svg class="ab" style="left:375px;top:321px" width="8" height="8" viewBox="0 0 8 8"><g transform="translate(0.000 0.080) scale(1.0000 1.0000)"><rect x="0" y="0" width="3.3" height="6.8" fill="#cf5252"/><rect x="0.8" y="0" width="0.7" height="6.8" fill="#e07a7a"/><rect x="2.2" y="0" width="0.7" height="6.8" fill="#e07a7a"/><rect x="3.3" y="0" width="3.5" height="6.8" fill="#ee0a18"/></g></svg>
<svg class="ab" style="left:385px;top:320px" width="9" height="9" viewBox="0 0 9 9"><g transform="translate(0.400 0.680) scale(0.5000 0.5000)"><rect width="14" height="14" rx="2.4" fill="#5598dc"/><path d="M3 7.2 L6 10.5 L11.3 3.1" fill="none" stroke="#fff" stroke-width="2.5"/></g></svg>
<svg class="ab" style="left:167px;top:330px" width="7" height="8" viewBox="0 0 7 8"><g transform="translate(0.000 0.930) scale(1.0000 1.0000)"><path d="M0.9 1.15 L5.1 1.15 L3 4.85 Z" fill="#ababab"/></g></svg>
<div class="t b" style="left:177px;top:330px;color:#262626;">Replaceable assignments</div>
<svg class="ab" style="left:375px;top:330px" width="8" height="9" viewBox="0 0 8 9"><g transform="translate(0.000 0.880) scale(1.0000 1.0000)"><rect width="6.8" height="6.8" fill="#8c8c8c"/></g></svg>
<svg class="ab" style="left:385px;top:330px" width="9" height="9" viewBox="0 0 9 9"><g transform="translate(0.400 0.480) scale(0.5000 0.5000)"><rect width="14" height="14" rx="2.4" fill="#4497e3"/><path d="M3 7.2 L6 10.5 L11.3 3.1" fill="none" stroke="#fff" stroke-width="2.5"/></g></svg>
<div class="t" style="left:185.8px;top:339px;color:#262626;">Assignment replaceable with increment or decrement</div>
<svg class="ab" style="left:375px;top:340px" width="8" height="9" viewBox="0 0 8 9"><g transform="translate(0.000 0.680) scale(1.0000 1.0000)"><rect width="6.8" height="6.8" fill="#8c8c8c"/></g></svg>
<svg class="ab" style="left:385px;top:340px" width="9" height="9" viewBox="0 0 9 9"><g transform="translate(0.400 0.280) scale(0.5000 0.5000)"><rect width="14" height="14" rx="2.4" fill="#4497e3"/><path d="M3 7.2 L6 10.5 L11.3 3.1" fill="none" stroke="#fff" stroke-width="2.5"/></g></svg>
<div class="t" style="left:185.8px;top:349px;color:#262626;">Assignment replaceable with operator assignment</div>
<svg class="ab" style="left:375px;top:350px" width="8" height="9" viewBox="0 0 8 9"><g transform="translate(0.000 0.480) scale(1.0000 1.0000)"><rect width="6.8" height="6.8" fill="#8c8c8c"/></g></svg>
<svg class="ab" style="left:385px;top:350px" width="9" height="9" viewBox="0 0 9 9"><g transform="translate(0.400 0.080) scale(0.5000 0.5000)"><rect width="14" height="14" rx="2.4" fill="#4497e3"/><path d="M3 7.2 L6 10.5 L11.3 3.1" fill="none" stroke="#fff" stroke-width="2.5"/></g></svg>
<svg class="ab" style="left:167px;top:360px" width="7" height="8" viewBox="0 0 7 8"><g transform="translate(0.000 0.330) scale(1.0000 1.0000)"><path d="M0.9 1.15 L5.1 1.15 L3 4.85 Z" fill="#ababab"/></g></svg>
<div class="t b" style="left:177px;top:359px;color:#262626;">Type compatibility</div>
<svg class="ab" style="left:385px;top:359px" width="9" height="9" viewBox="0 0 9 9"><g transform="translate(0.400 0.880) scale(0.5000 0.5000)"><rect width="14" height="14" rx="2.4" fill="#4497e3"/><rect x="2.6" y="5.5" width="8.8" height="3" fill="#fff"/></g></svg>
<div class="t" style="left:185.8px;top:369px;color:#262626;">Illegal array key type</div>
<svg class="ab" style="left:375px;top:370px" width="8" height="8" viewBox="0 0 8 8"><g transform="translate(0.000 0.080) scale(1.0000 1.0000)"><rect width="6.8" height="6.8" fill="#ee0a18"/></g></svg>
<svg class="ab" style="left:385px;top:369px" width="9" height="9" viewBox="0 0 9 9"><g transform="translate(0.400 0.680) scale(0.5000 0.5000)"><rect width="14" height="14" rx="2.4" fill="#4497e3"/><path d="M3 7.2 L6 10.5 L11.3 3.1" fill="none" stroke="#fff" stroke-width="2.5"/></g></svg>
<div class="t" style="left:185.8px;top:379px;color:#262626;">Illegal string offset</div>
<svg class="ab" style="left:375px;top:379px" width="8" height="9" viewBox="0 0 8 9"><g transform="translate(0.000 0.880) scale(1.0000 1.0000)"><rect width="6.8" height="6.8" fill="#ee0a18"/></g></svg>
<svg class="ab" style="left:385px;top:379px" width="9" height="9" viewBox="0 0 9 9"><g transform="translate(0.400 0.480) scale(0.5000 0.5000)"><rect width="14" height="14" rx="2.4" fill="#4497e3"/><path d="M3 7.2 L6 10.5 L11.3 3.1" fill="none" stroke="#fff" stroke-width="2.5"/></g></svg>
<div class="t" style="left:185.8px;top:388px;color:#262626;">Incompatible return type</div>
<svg class="ab" style="left:375px;top:389px" width="8" height="9" viewBox="0 0 8 9"><g transform="translate(0.000 0.680) scale(1.0000 1.0000)"><rect width="6.8" height="6.8" fill="#ee0a18"/></g></svg>
<svg class="ab" style="left:385px;top:389px" width="9" height="9" viewBox="0 0 9 9"><g transform="translate(0.400 0.280) scale(0.5000 0.5000)"><rect width="14" height="14" rx="2.4" fill="#4497e3"/><path d="M3 7.2 L6 10.5 L11.3 3.1" fill="none" stroke="#fff" stroke-width="2.5"/></g></svg>
<div class="t" style="left:185.8px;top:398px;color:#262626;">Invalid argument supplied for foreach()</div>
<svg class="ab" style="left:375px;top:399px" width="8" height="9" viewBox="0 0 8 9"><g transform="translate(0.000 0.480) scale(1.0000 1.0000)"><rect width="6.8" height="6.8" fill="#ee0a18"/></g></svg>
<svg class="ab" style="left:385px;top:399px" width="9" height="9" viewBox="0 0 9 9"><g transform="translate(0.400 0.080) scale(0.5000 0.5000)"><rect width="14" height="14" rx="2.4" fill="#4497e3"/><path d="M3 7.2 L6 10.5 L11.3 3.1" fill="none" stroke="#fff" stroke-width="2.5"/></g></svg>
<div class="t" style="left:185.8px;top:408px;color:#262626;">Missing property's type declaration</div>
<svg class="ab" style="left:375px;top:409px" width="8" height="9" viewBox="0 0 8 9"><g transform="translate(0.000 0.280) scale(1.0000 1.0000)"><rect width="6.8" height="6.8" fill="#ffffcc"/></g></svg>
<svg class="ab" style="left:385px;top:408px" width="9" height="9" viewBox="0 0 9 9"><g transform="translate(0.400 0.880) scale(0.5000 0.5000)"><rect width="14" height="14" rx="2.4" fill="#4497e3"/><path d="M3 7.2 L6 10.5 L11.3 3.1" fill="none" stroke="#fff" stroke-width="2.5"/></g></svg>
<div class="t" style="left:185.8px;top:418px;color:#262626;">Missing return type declaration</div>
<svg class="ab" style="left:375px;top:419px" width="8" height="8" viewBox="0 0 8 8"><g transform="translate(0.000 0.080) scale(1.0000 1.0000)"><rect width="6.8" height="6.8" fill="#8c8c8c"/></g></svg>
<svg class="ab" style="left:385px;top:418px" width="9" height="9" viewBox="0 0 9 9"><g transform="translate(0.400 0.680) scale(0.5000 0.5000)"><rect width="14" height="14" rx="2.4" fill="#4497e3"/><path d="M3 7.2 L6 10.5 L11.3 3.1" fill="none" stroke="#fff" stroke-width="2.5"/></g></svg>
<div class="t" style="left:185.8px;top:428px;color:#262626;">Missing strict types declaration</div>
<svg class="ab" style="left:385px;top:428px" width="9" height="9" viewBox="0 0 9 9"><g transform="translate(0.400 0.480) scale(0.5000 0.5000)"><rect x="0.7" y="0.7" width="12.6" height="12.6" rx="2.8" fill="#fff" stroke="#bdbdbd" stroke-width="1.4"/></g></svg>
<div class="t" style="left:185.8px;top:437px;color:#262626;">Parameter type</div>
<svg class="ab" style="left:375px;top:438px" width="8" height="9" viewBox="0 0 8 9"><g transform="translate(0.000 0.680) scale(1.0000 1.0000)"><rect width="6.8" height="6.8" fill="#ee0a18"/></g></svg>
<svg class="ab" style="left:385px;top:438px" width="9" height="9" viewBox="0 0 9 9"><g transform="translate(0.400 0.280) scale(0.5000 0.5000)"><rect width="14" height="14" rx="2.4" fill="#4497e3"/><path d="M3 7.2 L6 10.5 L11.3 3.1" fill="none" stroke="#fff" stroke-width="2.5"/></g></svg>
<div class="t" style="left:185.8px;top:447px;color:#262626;">Strict type checking rules violation</div>
<svg class="ab" style="left:375px;top:448px" width="8" height="9" viewBox="0 0 8 9"><g transform="translate(0.000 0.480) scale(1.0000 1.0000)"><rect width="6.8" height="6.8" fill="#cf6060"/></g></svg>
<svg class="ab" style="left:385px;top:448px" width="9" height="9" viewBox="0 0 9 9"><g transform="translate(0.400 0.080) scale(0.5000 0.5000)"><rect width="14" height="14" rx="2.4" fill="#4497e3"/><path d="M3 7.2 L6 10.5 L11.3 3.1" fill="none" stroke="#fff" stroke-width="2.5"/></g></svg>
<div class="t" style="left:185.8px;top:457px;color:#262626;">Type mismatch in property assignment</div>
<svg class="ab" style="left:375px;top:458px" width="8" height="9" viewBox="0 0 8 9"><g transform="translate(0.000 0.280) scale(1.0000 1.0000)"><rect width="6.8" height="6.8" fill="#ee0a18"/></g></svg>
<svg class="ab" style="left:385px;top:457px" width="9" height="9" viewBox="0 0 9 9"><g transform="translate(0.400 0.880) scale(0.5000 0.5000)"><rect width="14" height="14" rx="2.4" fill="#4497e3"/><path d="M3 7.2 L6 10.5 L11.3 3.1" fill="none" stroke="#fff" stroke-width="2.5"/></g></svg>
<svg class="ab" style="left:167px;top:468px" width="7" height="8" viewBox="0 0 7 8"><g transform="translate(0.000 0.130) scale(1.0000 1.0000)"><path d="M0.9 1.15 L5.1 1.15 L3 4.85 Z" fill="#ababab"/></g></svg>
<div class="t b" style="left:177px;top:467px;color:#262626;">Undefined</div>
<svg class="ab" style="left:385px;top:467px" width="9" height="9" viewBox="0 0 9 9"><g transform="translate(0.400 0.680) scale(0.5000 0.5000)"><rect width="14" height="14" rx="2.4" fill="#4497e3"/><rect x="2.6" y="5.5" width="8.8" height="3" fill="#fff"/></g></svg>
<svg class="ab" style="left:158px;top:479px" width="9" height="9" viewBox="0 0 9 9"><g transform="translate(0.400 0.100) scale(0.5000 0.5000)"><rect x="0.7" y="0.7" width="12.6" height="12.6" rx="2.8" fill="#fff" stroke="#bdbdbd" stroke-width="1.4"/></g></svg>
<div class="t" style="left:168.8px;top:478px;">Disable new inspections by default</div>
<div class="t" style="left:408.7px;top:63px;">Description:</div>
<svg class="ab" style="left:408px;top:72px" width="346" height="198" viewBox="0 0 346 198"><g transform="translate(0.000 0.400) scale(1.0000 1.0000)"><rect x="0.35" y="0.35" width="344.30" height="195.70" rx="0" fill="#fff" stroke="#d0d0d0" stroke-width="0.7"/></g></svg>
<div class="t" style="left:411.3px;top:75px;">Reports coding style problems detected by PHP_CodeSniffer.</div>
<div class="t" style="left:411.3px;top:90px;">The inspection requires PHP_CodeSniffer to be properly installed and set up in the IDE under <b class="b">Settings/Preferences | Languages</b></div>
<div class="t b" style="left:411.3px;top:98px;">PHP_CodeSniffer<span style="font-weight:normal">.</span></div>
<div class="t" style="left:411.3px;top:113px;">It is recommended to install PHP_CodeSniffer either as a Composer dependency or globally.</div>
<div class="t" style="left:411.3px;top:128px;">See <span style="color:#4a82c4;text-decoration:underline;">PHP_CodeSniffer installation (GitHub)</span> for details.</div>
<div class="t" style="left:409.1px;top:275px;">Severity by Scope</div>
<svg class="ab" style="left:409px;top:283px" width="346" height="65" viewBox="0 0 346 65"><g transform="translate(0.000 0.600) scale(1.0000 1.0000)"><rect x="0.35" y="0.35" width="344.30" height="62.20" rx="0" fill="#f5f5f5" stroke="#d6d6d6" stroke-width="0.7"/></g></svg>
<div class="ab" style="left:409.8px;top:284px;width:341px;height:49.4px;background:#fff;"></div>
<div class="ab" style="left:409.8px;top:333.4px;width:341px;height:0.6px;background:#dcdcdc;"></div>
<div class="ab" style="left:409.8px;top:284px;width:341px;height:9.9px;background:#2e7dc5;"></div>
<svg class="ab" style="left:410px;top:285px" width="9" height="9" viewBox="0 0 9 9"><g transform="translate(0.900 0.900) scale(0.4429 0.4429)"><rect width="14" height="14" rx="2.4" fill="#4f95dc"/><path d="M3 7.2 L6 10.5 L11.3 3.1" fill="none" stroke="#fff" stroke-width="2.5"/></g></svg>
<div class="t" style="left:426px;top:285px;color:#fff;">Everywhere else</div>
<svg class="ab" style="left:681px;top:285px" width="9" height="9" viewBox="0 0 9 9"><g transform="translate(0.500 0.800) scale(1.0000 1.0000)"><rect width="6.7" height="6.6" fill="#ee0a18"/></g></svg>
<div class="t" style="left:690.3px;top:285px;color:#fff;">Warning</div>
<svg class="ab" style="left:413px;top:337.2px" width="6" height="6" viewBox="0 0 12 12"><path d="M6 1 V11 M1 6 H11" stroke="#6e6e6e" stroke-width="1.9"/></svg>
<svg class="ab" style="left:425.8px;top:337.2px" width="6" height="6" viewBox="0 0 12 12"><path d="M1.4 6 H10.6" stroke="#c2c2c2" stroke-width="1.7"/></svg>
<div class="t" style="left:409.3px;top:346px;">Options</div>
<div class="ab" style="left:436.2px;top:350.2px;width:314px;height:0.6px;background:#d6d6d6;"></div>
<div class="t" style="left:411.7px;top:357px;">Check files with extensions:</div>
<svg class="ab" style="left:506px;top:355px" width="252" height="14" viewBox="0 0 252 14"><g transform="translate(0.200 0.400) scale(1.0000 1.0000)"><rect x="0.35" y="0.35" width="249.30" height="11.30" rx="0" fill="#fff" stroke="#c6c6c6" stroke-width="0.7"/></g></svg>
<div class="t" style="left:509.3px;top:357px;">php</div>
<svg class="ab" style="left:413px;top:373px" width="9" height="9" viewBox="0 0 9 9"><g transform="translate(0.100 0.400) scale(0.5000 0.5000)"><rect width="14" height="14" rx="2.4" fill="#4497e3"/><path d="M3 7.2 L6 10.5 L11.3 3.1" fill="none" stroke="#fff" stroke-width="2.5"/></g></svg>
<div class="t" style="left:423px;top:373px;">Show warning as:</div>
<svg class="ab" style="left:506px;top:372px" width="38" height="12" viewBox="0 0 38 12"><g transform="translate(0.700 0.100) scale(1.0000 1.0000)"><rect x="0.35" y="0.35" width="35.20" height="9.60" rx="1.8" fill="#fff" stroke="#cdcdcd" stroke-width="0.7"/></g></svg>
<svg class="ab" style="left:510px;top:374px" width="8" height="8" viewBox="0 0 8 8"><g transform="translate(0.200 0.000) scale(1.0000 1.0000)"><rect width="6.7" height="6.6" fill="#da5f63"/></g></svg>
<div class="t" style="left:519px;top:373px;font-size:5.2px;">Error</div>
<svg class="ab" style="left:535px;top:376px" width="6" height="4" viewBox="0 0 6 4"><g transform="translate(0.100 0.300) scale(0.8000 0.8000)"><path d="M0.1 0.1 L4.9 0.1 L2.5 2.95 Z" fill="#4a4a4a"/></g></svg>
<svg class="ab" style="left:413px;top:386px" width="9" height="9" viewBox="0 0 9 9"><g transform="translate(0.100 0.900) scale(0.5000 0.5000)"><rect width="14" height="14" rx="2.4" fill="#4497e3"/><path d="M3 7.2 L6 10.5 L11.3 3.1" fill="none" stroke="#fff" stroke-width="2.5"/></g></svg>
<div class="t" style="left:423px;top:386px;">Show sniff name</div>
<svg class="ab" style="left:413px;top:401px" width="9" height="9" viewBox="0 0 9 9"><g transform="translate(0.100 0.700) scale(0.5000 0.5000)"><rect x="0.7" y="0.7" width="12.6" height="12.6" rx="2.8" fill="#fff" stroke="#bdbdbd" stroke-width="1.4"/></g></svg>
<div class="t" style="left:423px;top:400px;">Installed standard paths:</div>
<svg class="ab" style="left:506px;top:399px" width="252" height="14" viewBox="0 0 252 14"><g transform="translate(0.200 0.800) scale(1.0000 1.0000)"><rect x="0.35" y="0.35" width="249.30" height="10.90" rx="0" fill="#f5f5f5" stroke="#d6d6d6" stroke-width="0.7"/></g></svg>
<div class="t" style="left:411.7px;top:418px;">Coding standard:</div>
<svg class="ab" style="left:470px;top:417px" width="292" height="13" viewBox="0 0 292 13"><g transform="translate(0.400 0.600) scale(1.0000 1.0000)"><rect x="0.35" y="0.35" width="289.30" height="10.20" rx="0" fill="#fff" stroke="#c4c4c4" stroke-width="0.7"/></g></svg>
<div class="t" style="left:473.6px;top:418px;">Magento2</div>
<div class="t" style="left:412.6px;top:434px;color:#3f7cc2;letter-spacing:-0.2px;">PHP_CodeSniffer</div>
</body></html>
